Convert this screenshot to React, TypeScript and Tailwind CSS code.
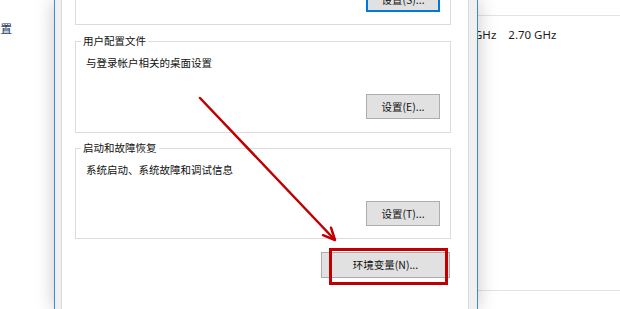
import React from 'react';

const cjk = "font-['Microsoft_YaHei','Noto_Sans_CJK_SC',sans-serif]";

function WinButton({ label, focused, className = '' }: { label: string; focused?: boolean; className?: string }) {
  return (
    <div
      className={`flex items-center justify-center bg-[#e1e1e1] text-[10.5px] text-[#111] leading-[16px] ${
        focused ? 'border border-[#0078d7] shadow-[inset_0_0_0_1px_#0078d7]' : 'border border-[#adadad]'
      } ${className}`}
    >
      {label}
    </div>
  );
}

function GroupBox({
  title,
  text,
  button,
  className,
  buttonGap,
  bottomPad,
}: {
  title: string;
  text: string;
  button: string;
  className: string;
  buttonGap: string;
  bottomPad: string;
}) {
  return (
    <fieldset className={`border border-[#dcdcdc] ${bottomPad} ${className}`}>
      <legend className="ml-[5px] px-[2px] text-[10.5px] leading-[16px] text-[#111]">{title}</legend>
      <p className="mt-[6px] pl-[10px] text-[10.5px] leading-[16px] text-[#111]">{text}</p>
      <div className={`flex justify-end pr-[10px] ${buttonGap}`}>
        <WinButton label={button} className="w-[74px] h-[25px]" />
      </div>
    </fieldset>
  );
}

export default function App() {
  return (
    <div className={`relative flex w-[620px] h-[309px] overflow-hidden bg-white ${cjk}`}>
      {/* window behind, left */}
      <div className="w-[54px] shrink-0 overflow-hidden bg-white pt-[20px]">
        <div className="-ml-[11px] whitespace-nowrap text-[11.5px] leading-[16px] text-[#1d3867]">设置</div>
      </div>

      {/* system properties dialog */}
      <div className="relative z-10 flex w-[424px] shrink-0 border-x border-[#3d8ad6] bg-[#f0f0f0] pl-[6px] pr-[8px] shadow-[0_0_18px_rgba(0,0,0,0.22)]">
        <div className="flex-1 border-x border-[#d9d9d9] bg-white pl-[13px]">
          <div className="w-[376px]">
            <div className="h-[25px] border-x border-b border-[#dcdcdc]">
              <div className="flex justify-end pr-[10px]">
                <WinButton label="设置(S)..." focused className="-mt-[13px] w-[74px] h-[25px]" />
              </div>
            </div>

            <GroupBox
              title="用户配置文件"
              text="与登录帐户相关的桌面设置"
              button="设置(E)..."
              className="mt-[8px]"
              buttonGap="mt-[23px]"
              bottomPad="pb-[13px]"
            />

            <GroupBox
              title="启动和故障恢复"
              text="系统启动、系统故障和调试信息"
              button="设置(T)..."
              className="mt-[7px]"
              buttonGap="mt-[23px]"
              bottomPad="pb-[12px]"
            />

            <div className="mt-[13px] flex justify-end pr-[1px]">
              <div className="relative">
                <WinButton label="环境变量(N)..." className="w-[129px] h-[26px]" />
                <div className="absolute left-[8px] top-[-4px] w-[119px] h-[37px] border-[3px] border-[#c00000]" />
              </div>
            </div>
          </div>
        </div>
      </div>

      {/* window behind, right */}
      <div className="flex flex-1 flex-col overflow-hidden bg-white font-['Segoe_UI','Noto_Sans',sans-serif] text-[11.5px] text-[#1e1e1e]">
        <div className="h-[16px] border-b border-[#e3e3e3]" />
        <div className="mt-[11px] flex whitespace-nowrap leading-[16px]">
          <span className="-ml-[4px]">GHz</span>
          <span className="ml-[12px]">2.70 GHz</span>
        </div>
        <div className="mt-auto h-[19px] border-t border-[#e3e3e3]" />
      </div>

      {/* annotation arrow */}
      <svg className="pointer-events-none absolute inset-0 z-20" width="620" height="309" viewBox="0 0 620 309">
        <g stroke="#c00000" strokeWidth="2.5" strokeLinecap="round" fill="none">
          <line x1="200" y1="98" x2="334.5" y2="239.5" />
          <polyline points="331,227.7 335,240 323,235.2" strokeLinejoin="round" />
        </g>
      </svg>
    </div>
  );
}
